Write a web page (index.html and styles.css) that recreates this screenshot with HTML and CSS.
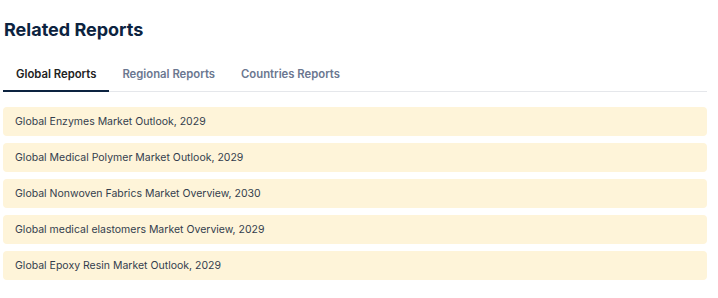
FILE: index.html
```html
<!DOCTYPE html>
<html lang="en">
<head>
    <meta charset="UTF-8">
    <meta name="viewport" content="width=device-width, initial-scale=1.0">
    <title>Related Reports</title>
    <link rel="stylesheet" href="styles.css">
</head>
<body>
    <div class="container">
        <h2 class="title">Related Reports</h2>
        <div class="tabs">
            <button class="tab active">Global Reports</button>
            <button class="tab">Regional Reports</button>
            <button class="tab">Countries Reports</button>
        </div>
        <ul class="report-list">
            <li class="report-item">Global Enzymes Market Outlook, 2029</li>
            <li class="report-item">Global Medical Polymer Market Outlook, 2029</li>
            <li class="report-item">Global Nonwoven Fabrics Market Overview, 2030</li>
            <li class="report-item">Global medical elastomers Market Overview, 2029</li>
            <li class="report-item">Global Epoxy Resin Market Outlook, 2029</li>
        </ul>
    </div>
</body>
</html>
```

FILE: styles.css
```css
body {
    font-family: Inter, "Noto Sans", sans-serif;
    margin: 0;
    background-color: #fff;
}
.container {
    padding: 18px 11px 0 3px;
}
.title {
    margin: 0 0 0 1px;
    font-size: 18px;
    font-weight: 700;
    line-height: 24px;
    color: #0c2340;
}
.tabs {
    display: flex;
    margin-top: 18px;
    border-bottom: 1px solid #e5e7eb;
}
.tab {
    font-family: inherit;
    font-size: 11.3px;
    font-weight: 600;
    color: #6b7790;
    background: none;
    border: none;
    border-bottom: 2px solid transparent;
    margin-bottom: -1px;
    padding: 7px 13px 9px;
    cursor: pointer;
}
.tab.active {
    color: #222;
    border-bottom-color: #0c2340;
}
.report-list {
    list-style: none;
    margin: 15px 0 0;
    padding: 0;
    display: flex;
    flex-direction: column;
    gap: 7px;
}
.report-item {
    background-color: #fef4d9;
    border-radius: 4px;
    padding: 0 12px;
    height: 29px;
    line-height: 29px;
    font-size: 10.5px;
    color: #333d4d;
}
```
